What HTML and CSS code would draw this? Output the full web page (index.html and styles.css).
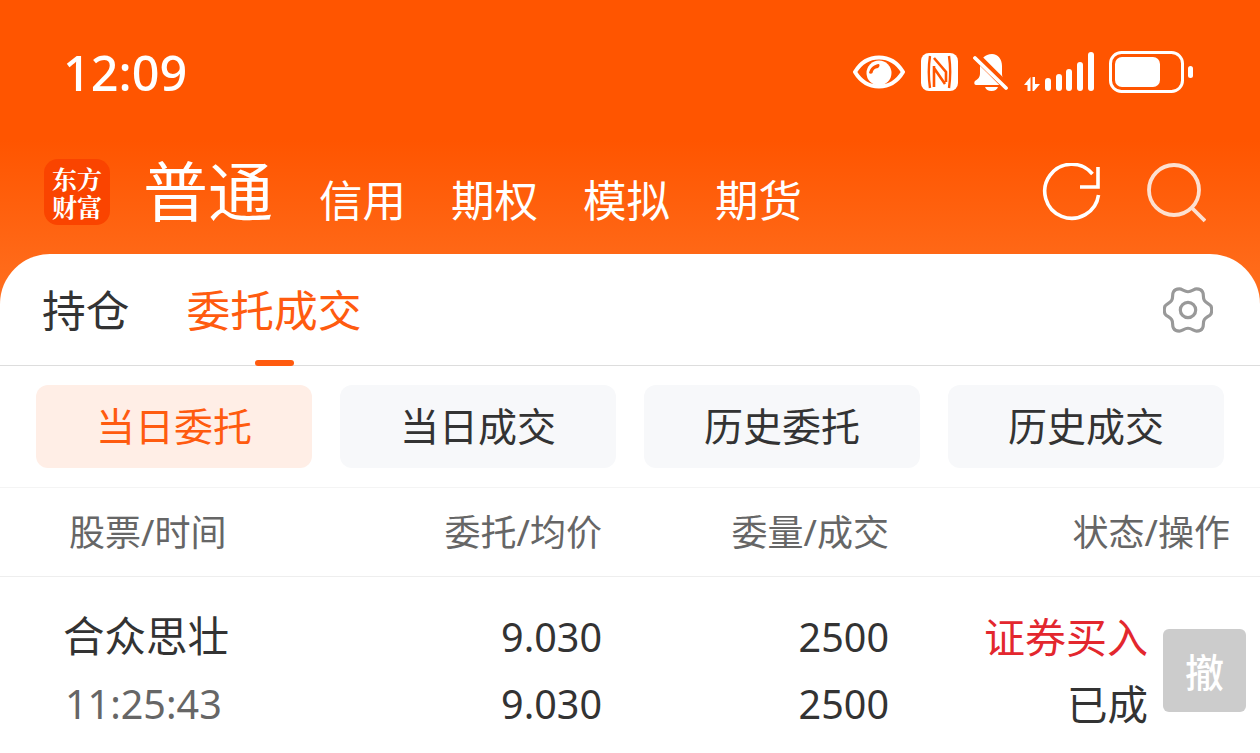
FILE: index.html
```html
<!DOCTYPE html>
<html lang="zh-CN">
<head>
  <meta charset="UTF-8">
  <meta name="viewport" content="width=device-width, initial-scale=1.0">
  <title>委托成交</title>
  <link rel="stylesheet" href="styles.css">
</head>
<body>
  <!-- Orange header -->
  <header class="top">
    <div class="status-bar">
      <span class="clock">12:09</span>
      <div class="status-icons">
        <svg class="ic-eye" width="52" height="36" viewBox="0 0 52 36">
          <path d="M2 18C8 8 16 3.500 26 3.500S44 8 50 18c-6 10-14 14.500-24 14.500S8 28 2 18z" fill="none" stroke="#fff" stroke-width="4" stroke-linejoin="round"/>
          <circle cx="26" cy="19" r="12.500" fill="#fff"/>
          <path d="M26 10c-5 .5-9 4-10 9 1 1 2.500 1 3.500 0 .5-3 2-4.500 5.500-5 1.500-1 2-3 1-4z" fill="#ff5500"/>
        </svg>
        <svg class="ic-nfc" width="37" height="38" viewBox="0 0 37 38">
          <rect width="37" height="38" rx="8" fill="#fff"/>
          <path d="M9 3c-1.500 10-1.500 22 0 32M28 3c1.500 10 1.500 22 0 32" fill="none" stroke="#ff5500" stroke-width="2.400"/>
          <path d="M13 5l12 14v10M13 13v21M13 15l11 16" fill="none" stroke="#ff5500" stroke-width="2.600"/>
        </svg>
        <svg class="ic-bell" width="36" height="38" viewBox="0 0 36 38">
          <path d="M19 1c-7 0-12 5-12 12v8c0 3-2 5-5 7-1 1-1 4 1 4h26c4 0 5-3 3-5-2-1-3-3-3-6v-8C29 6 25 1 19 1z" fill="#fff"/>
          <path d="M12 34h13c-1 2.500-3 4-6.500 4S13 36.500 12 34z" fill="#fff"/>
          <path d="M1 1l35 35" stroke="#ff5500" stroke-width="8"/>
          <path d="M2 5l31 30" stroke="#fff" stroke-width="3.800" stroke-linecap="round"/>
        </svg>
        <svg class="ic-signal" width="70" height="40" viewBox="0 0 70 40">
          <path d="M0 33l6.500-8v14H3.500v-6zM8.500 25H11v7h5l-6 7H8.500z" fill="#fff"/>
          <rect x="21" y="26" width="6" height="13" rx="3" fill="#fff"/>
          <rect x="32" y="22" width="6" height="17" rx="3" fill="#fff"/>
          <rect x="42" y="17" width="6" height="22" rx="3" fill="#fff"/>
          <rect x="53" y="10" width="6" height="29" rx="3" fill="#fff"/>
          <rect x="64" y="0" width="6" height="39" rx="3" fill="#fff"/>
        </svg>
        <svg class="ic-battery" width="84" height="42" viewBox="0 0 84 42">
          <rect x="1.500" y="1.500" width="72" height="39" rx="11" fill="none" stroke="#fff" stroke-width="3"/>
          <rect x="6" y="6" width="45" height="30" rx="7" fill="#fff"/>
          <rect x="79" y="15" width="5" height="12" rx="2.500" fill="#fff"/>
        </svg>
      </div>
    </div>

    <div class="account-bar">
      <div class="logo">东方<br>财富</div>
      <span class="account-main">普通</span>
      <nav class="account-nav">
        <span>信用</span>
        <span>期权</span>
        <span>模拟</span>
        <span>期货</span>
      </nav>
      <div class="top-actions">
        <svg width="60" height="60" viewBox="0 0 60 60" fill="none" stroke="#fff" stroke-width="3.600">
          <path d="M56.500 32a27 27 0 1 1-6-21"/>
          <path d="M56 4v20H38"/>
        </svg>
        <svg class="ic-search" width="60" height="60" viewBox="0 0 60 60" fill="none" stroke="#fde0d0" stroke-width="3.800">
          <circle cx="28" cy="27" r="25"/>
          <path d="M46 45l13 13"/>
        </svg>
      </div>
    </div>
  </header>

  <!-- White panel -->
  <main class="panel">
    <div class="tabs">
      <span class="tab">持仓</span>
      <span class="tab tab-on">委托成交</span>
      <svg class="ic-gear" width="50" height="50" viewBox="0 0 52 50" fill="none" stroke="#999" stroke-width="3.300">
        <path d="M17 3c3 0 5 3 9 3s6-3 9-3c2 0 5 1 6 3 2 3 0 6 2 9s5 3 7 6c1 3 1 5 0 8-2 3-5 3-7 6s0 6-2 9c-1 2-4 3-6 3-3 0-5-3-9-3s-6 3-9 3c-2 0-5-1-6-3-2-3 0-6-2-9s-5-3-7-6c-1-3-1-5 0-8 2-3 5-3 7-6s0-6 2-9c1-2 4-3 6-3z"/>
        <circle cx="26" cy="25" r="8"/>
      </svg>
    </div>

    <div class="segments">
      <button class="seg seg-on">当日委托</button>
      <button class="seg">当日成交</button>
      <button class="seg">历史委托</button>
      <button class="seg">历史成交</button>
    </div>

    <div class="cols cols-head">
      <span class="first">股票/时间</span>
      <span>委托/均价</span>
      <span>委量/成交</span>
      <span>状态/操作</span>
    </div>

    <div class="order">
      <div class="cols order-cells">
        <span class="first name">合众思壮</span>
        <span>9.030</span>
        <span>2500</span>
        <span class="buy">证券买入</span>
        <span class="first time">11:25:43</span>
        <span>9.030</span>
        <span>2500</span>
        <span class="done">已成</span>
      </div>
      <button class="cancel">撤</button>
    </div>
  </main>
</body>
</html>
```

FILE: styles.css
```css
* {
  box-sizing: border-box;
}

html, body {
  height: 100%;
}

body {
  margin: 0;
  overflow: hidden;
  background: #fff;
  color: #333;
  font-family: "Noto Sans", "Noto Sans CJK SC", sans-serif;
}

/* Header */
.top {
  height: 304px;
  padding-top: 50px;
  background: linear-gradient(180deg, #ff5500 0, #ff5500 140px, #ff7020 304px);
  color: #fff;
}

.status-bar {
  display: flex;
  align-items: center;
  justify-content: space-between;
  height: 44px;
  padding: 0 67px 0 63px;
}

.clock {
  font-family: "Noto Sans", sans-serif;
  font-size: 48.5px;
  font-weight: 500;
  line-height: 44px;
}

.status-icons {
  display: flex;
  align-items: center;
  gap: 15px;
}

.ic-eye {
  margin-right: 1px;
}

.account-bar {
  display: flex;
  align-items: flex-end;
  height: 76px;
  margin-top: 56px;
  padding: 0 54px 0 44px;
}

.logo {
  width: 66px;
  height: 66px;
  margin-bottom: 1px;
  padding-top: 5px;
  border-radius: 14px;
  background: #fa4400;
  font-family: "Noto Serif CJK SC", serif;
  font-size: 25px;
  font-weight: 700;
  line-height: 28px;
  text-align: center;
}

.account-main {
  margin-left: 33px;
  font-family: "Noto Sans CJK SC", sans-serif;
  font-size: 65px;
  line-height: 76px;
}

.account-nav {
  display: flex;
  gap: 45px;
  margin-left: 46px;
  font-size: 43.5px;
  line-height: 52px;
}

.top-actions {
  display: flex;
  align-items: center;
  gap: 44px;
  margin-left: auto;
  padding-bottom: 3px;
}

/* Panel */
.panel {
  margin-top: -50px;
  height: 499px;
  border-radius: 50px 50px 0 0;
  background: #fff;
}

.tabs {
  display: flex;
  align-items: center;
  gap: 57px;
  height: 112px;
  padding: 0 47px 0 42px;
  border-bottom: 1px solid #ddd;
}

.tab {
  position: relative;
  font-size: 43.75px;
  line-height: 112px;
}

.tab-on {
  color: #ff5b0f;
}

.tab-on::after {
  content: "";
  position: absolute;
  left: 68px;
  bottom: 0;
  width: 39px;
  height: 6px;
  border-radius: 3px;
  background: #ff5b0f;
}

.ic-gear {
  margin-left: auto;
}

.segments {
  display: grid;
  grid-template-columns: repeat(4, 276px);
  gap: 28px;
  height: 122px;
  padding: 19px 36px 19px;
  border-bottom: 1px solid #f4f4f4;
}

.seg {
  padding: 0 0 5px;
  border: 0;
  border-radius: 12px;
  background: #f7f8fa;
  color: #333;
  font-family: inherit;
  font-size: 39px;
}

.seg-on {
  background: #ffeee6;
  color: #ff5b0f;
}

.cols {
  display: grid;
  grid-template-columns: 280px 257px 287px 259px;
  text-align: right;
}

.cols .first {
  text-align: left;
}

.cols-head {
  grid-template-columns: 276px 257px 287px 341px;
  align-items: center;
  height: 89px;
  padding: 0 0 4px 69px;
  border-bottom: 1px solid #eee;
  color: #666;
  font-size: 36px;
}

.order {
  display: flex;
  align-items: center;
  gap: 15px;
  padding: 26px 0 0 65px;
}

.order-cells {
  flex: none;
  grid-auto-rows: 67px;
  align-items: center;
  font-size: 39.5px;
}

.order-cells span {
  white-space: nowrap;
}

.name {
  margin-left: -2px;
  padding-bottom: 5px;
  font-size: 41.5px;
}

.time {
  color: #666;
}

.buy {
  padding-bottom: 4px;
  color: #e3272e;
  font-size: 41px;
}

.done {
  padding-bottom: 2px;
  font-size: 40.5px;
}

.cancel {
  width: 83px;
  height: 83px;
  padding: 0;
  border: 0;
  border-radius: 6px;
  background: #ccc;
  color: #fff;
  font-family: inherit;
  font-size: 39px;
  font-weight: 500;
}
```
